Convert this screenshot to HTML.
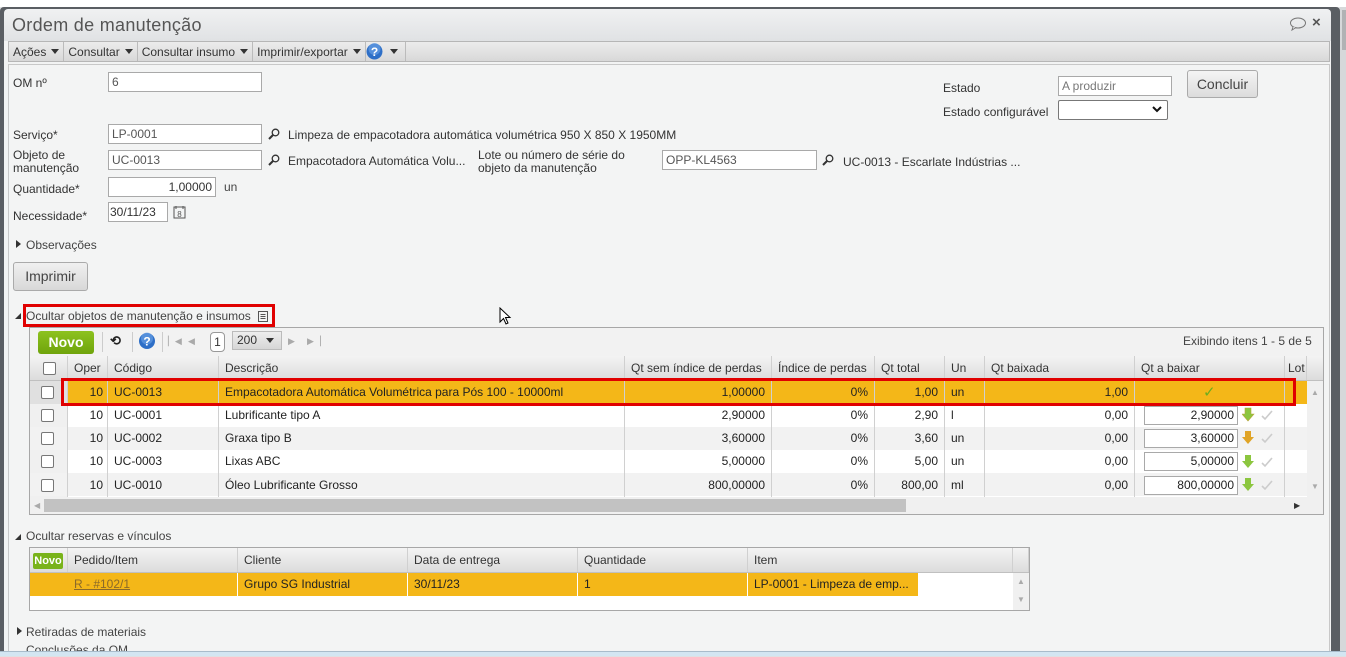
<!DOCTYPE html>
<html><head><meta charset="utf-8">
<style>
*{box-sizing:border-box;margin:0;padding:0}
body{width:1346px;height:656px;overflow:hidden;background:#dfe1e3;font-family:"Liberation Sans",sans-serif;font-size:12px;color:#333;position:relative}
.a{position:absolute}
.inp{position:absolute;background:#fff;border:1px solid #a9a9a9;height:20px;padding:1px 3px;font-size:12px;color:#555;line-height:16px;white-space:nowrap}
.lbl{position:absolute;font-size:12px;color:#333;line-height:13px}
.tb{display:flex;align-items:center}
.tb span{display:flex;align-items:center;padding:0 4px;border-right:1px solid #bbb;height:19px}
.grid{position:absolute;border:1px solid #a7a7a7;background:#fff}
.hdr{position:absolute;background:linear-gradient(#f4f4f4,#dcdcdc);border-bottom:1px solid #c0c0c0}
.c{position:absolute;height:100%;border-right:1px solid #d0d0d0;padding:0 6px;white-space:nowrap;overflow:hidden}
.row{position:absolute;left:0;height:23px;line-height:23px}
.r{text-align:right}
.cb{position:absolute;width:13px;height:13px;border:1px solid #777;border-radius:2px;background:#fff}
.tri{display:inline-block;width:0;height:0;border-left:4px solid transparent;border-right:4px solid transparent;border-top:5px solid #333;margin-left:5px}
.mag{position:absolute;width:12px;height:12px}
</style></head><body>
<div class="a" style="left:0;top:0;width:1346px;height:7px;background:#fff"></div>
<div class="a" style="left:0;top:7px;width:1340px;height:644px;background:#5a5e63;border-radius:4px 4px 0 0"></div>
<div class="a" style="left:1340px;top:7px;width:6px;height:644px;background:#d6d8da"></div>
<div class="a" style="left:1342px;top:10px;width:4px;height:40px;background:#b0b2b4"></div>
<div class="a" style="left:4px;top:9px;width:1327px;height:32px;background:linear-gradient(#f0f1f2,#e0e2e4);border-radius:4px 4px 0 0"></div>
<div class="a" style="left:12px;top:15px;font-size:18px;color:#555;letter-spacing:0.3px">Ordem de manutenção</div>
<svg class="a" style="left:1289px;top:17px" width="18" height="14"><ellipse cx="9" cy="6" rx="7.5" ry="5" fill="none" stroke="#777" stroke-width="1"/><path d="M4 10 L3 13 L7 10.5" fill="#fff" stroke="#777" stroke-width="1"/></svg>
<div class="a" style="left:1312px;top:14px;font-size:15px;font-weight:bold;color:#555">×</div>
<div class="a" style="left:4px;top:41px;width:1327px;height:610px;background:#f2f3f3"></div>
<div class="a tb" style="left:8px;top:41px;width:1322px;height:21px;background:linear-gradient(#ececec,#d8d8d8);border:1px solid #b6b6b6;font-size:12px;color:#333">
<span>Ações<i class="tri"></i></span><span>Consultar<i class="tri"></i></span><span>Consultar insumo<i class="tri"></i></span><span>Imprimir/exportar<i class="tri"></i></span><span style="width:40px;position:relative;padding:0"><svg style="position:absolute;left:0;top:1px" width="17" height="17"><circle cx="8.5" cy="8.5" r="8" fill="#2e6fc7"/><circle cx="8.5" cy="6" r="6" fill="#6ea5e8" opacity=".6"/><text x="8.5" y="13" font-size="12" font-weight="bold" fill="#fff" text-anchor="middle" font-family="Liberation Sans">?</text></svg><i class="tri" style="position:absolute;left:24px;top:7px;margin:0"></i></span>
</div>
<div class="a" style="left:8px;top:64px;width:1322px;height:587px;border:1px solid #c8c8c8;border-bottom:none;background:#f3f4f4"></div>

<div class="lbl" style="left:13px;top:77px">OM nº</div>
<div class="inp" style="left:108px;top:72px;width:154px">6</div>
<div class="lbl" style="left:943px;top:82px">Estado</div>
<div class="inp" style="left:1058px;top:76px;width:114px;color:#777">A produzir</div>
<div class="lbl" style="left:943px;top:106px">Estado configurável</div>
<div class="inp" style="left:1058px;top:100px;width:110px;height:20px;border-color:#777;border-radius:2px"><svg style="position:absolute;right:5px;top:5px" width="10" height="7"><path d="M1 1 L5 5 L9 1" fill="none" stroke="#111" stroke-width="2"/></svg></div>
<div class="a" style="left:1187px;top:70px;width:71px;height:28px;border:1px solid #aaa;border-radius:3px;background:linear-gradient(#f4f4f4,#dcdcdc);font-size:14px;color:#444;text-align:center;line-height:26px">Concluir</div>

<div class="lbl" style="left:13px;top:129px">Serviço*</div>
<div class="inp" style="left:108px;top:124px;width:154px">LP-0001</div>
<svg class="mag" style="left:268px;top:128px" viewBox="0 0 12 12"><circle cx="7.5" cy="4.5" r="3.3" fill="none" stroke="#333" stroke-width="1.3"/><path d="M5 7 L1 11" stroke="#333" stroke-width="2"/></svg>
<div class="lbl" style="left:288px;top:129px">Limpeza de empacotadora automática volumétrica 950 X 850 X 1950MM</div>

<div class="lbl" style="left:13px;top:149px">Objeto de<br>manutenção</div>
<div class="inp" style="left:108px;top:150px;width:154px">UC-0013</div>
<svg class="mag" style="left:268px;top:154px" viewBox="0 0 12 12"><circle cx="7.5" cy="4.5" r="3.3" fill="none" stroke="#333" stroke-width="1.3"/><path d="M5 7 L1 11" stroke="#333" stroke-width="2"/></svg>
<div class="lbl" style="left:288px;top:155px">Empacotadora Automática Volu...</div>
<div class="lbl" style="left:478px;top:149px">Lote ou número de série do<br>objeto da manutenção</div>
<div class="inp" style="left:662px;top:150px;width:155px">OPP-KL4563</div>
<svg class="mag" style="left:822px;top:154px" viewBox="0 0 12 12"><circle cx="7.5" cy="4.5" r="3.3" fill="none" stroke="#333" stroke-width="1.3"/><path d="M5 7 L1 11" stroke="#333" stroke-width="2"/></svg>
<div class="lbl" style="left:843px;top:156px">UC-0013 - Escarlate Indústrias ...</div>

<div class="lbl" style="left:13px;top:183px">Quantidade*</div>
<div class="inp" style="left:108px;top:177px;width:108px;text-align:right;color:#333">1,00000</div>
<div class="lbl" style="left:224px;top:181px;color:#444">un</div>

<div class="lbl" style="left:13px;top:210px">Necessidade*</div>
<div class="inp" style="left:108px;top:202px;width:60px;color:#333;padding:1px 1px">30/11/23</div>
<svg class="a" style="left:173px;top:205px" width="13" height="14"><rect x="1" y="2" width="11" height="11" fill="none" stroke="#555"/><path d="M3 1v3M10 1v3" stroke="#555"/><text x="6.5" y="12" font-size="8" text-anchor="middle" fill="#555" font-family="Liberation Sans">8</text></svg>

<div class="a" style="left:16px;top:240px;width:0;height:0;border-top:4px solid transparent;border-bottom:4px solid transparent;border-left:5px solid #333"></div>
<div class="lbl" style="left:26px;top:239px;color:#444">Observações</div>
<div class="a" style="left:13px;top:262px;width:75px;height:29px;border:1px solid #aaa;border-radius:3px;background:linear-gradient(#f0f0f0,#d8d8d8);font-size:14px;color:#444;text-align:center;line-height:27px">Imprimir</div>

<div class="a" style="left:15px;top:313px;width:0;height:0;border-left:6px solid transparent;border-bottom:6px solid #333"></div>
<div class="lbl" style="left:26px;top:310px;color:#444">Ocultar objetos de manutenção e insumos</div>
<svg class="a" style="left:258px;top:311px" width="10" height="11"><rect x="0.5" y="0.5" width="9" height="10" fill="none" stroke="#555"/><path d="M2.5 3.5h5M2.5 5.5h5M2.5 7.5h5" stroke="#555"/></svg>
<div class="a" style="left:23px;top:304px;width:252px;height:23px;border:3px solid #e00000"></div>
<svg class="a" style="left:499px;top:307px" width="14" height="20"><path d="M1 1 L1 15 L4.5 11.5 L7 17 L9 16 L6.5 10.5 L11 10.5 Z" fill="#fff" stroke="#000" stroke-width="1"/></svg>

<div class="grid" style="left:29px;top:327px;width:1295px;height:188px;background:#f2f2f2">
 <div class="a" style="left:8px;top:3px;width:56px;height:23px;background:linear-gradient(#8dc21f,#6fa40c);border-radius:3px;color:#fff;font-weight:bold;font-size:14px;text-align:center;line-height:23px">Novo</div>
 <div class="a" style="left:72px;top:4px;width:1px;height:20px;background:#ccc"></div>
 <div class="a" style="left:80px;top:5px;font-size:13px;font-weight:bold;color:#222">⟲</div>
 <div class="a" style="left:102px;top:4px;width:1px;height:20px;background:#ccc"></div>
 <svg class="a" style="left:108px;top:4px" width="18" height="18"><circle cx="9" cy="9" r="8" fill="#2e6fc7"/><circle cx="9" cy="6.5" r="6" fill="#6ea5e8" opacity=".6"/><text x="9" y="13.5" font-size="12" font-weight="bold" fill="#fff" text-anchor="middle" font-family="Liberation Sans">?</text></svg>
 <div class="a" style="left:132px;top:4px;width:1px;height:20px;background:#ccc"></div>
 <div class="a" style="left:138px;top:8px;color:#aaa;font-size:9px">▏◀</div>
 <div class="a" style="left:158px;top:8px;color:#aaa;font-size:9px">◀</div>
 <div class="a" style="left:180px;top:4px;width:15px;height:20px;border:1px solid #999;border-radius:4px;background:#fff;text-align:center;line-height:18px">1</div>
 <div class="a" style="left:202px;top:3px;width:50px;height:19px;border:1px solid #bbb;background:linear-gradient(#eee,#d6d6d6);padding-left:4px;line-height:17px">200<i class="tri" style="margin-left:9px;vertical-align:middle"></i></div>
 <div class="a" style="left:258px;top:8px;color:#aaa;font-size:9px">▶</div>
 <div class="a" style="left:277px;top:8px;color:#aaa;font-size:9px">▶▕</div>
 <div class="a" style="left:1153px;top:6px;color:#444">Exibindo itens 1 - 5 de 5</div>

 <div class="hdr" style="left:0;top:28px;width:1293px;height:25px;line-height:24px">
  <div class="c" style="left:0;width:38px"></div><div class="cb" style="left:13px;top:6px"></div>
  <div class="c" style="left:38px;width:40px">Oper</div>
  <div class="c" style="left:78px;width:111px">Código</div>
  <div class="c" style="left:189px;width:406px">Descrição</div>
  <div class="c" style="left:595px;width:147px">Qt sem índice de perdas</div>
  <div class="c" style="left:742px;width:103px">Índice de perdas</div>
  <div class="c" style="left:845px;width:70px">Qt total</div>
  <div class="c" style="left:915px;width:40px">Un</div>
  <div class="c" style="left:955px;width:150px">Qt baixada</div>
  <div class="c" style="left:1105px;width:150px">Qt a baixar</div>
  <div class="c" style="left:1255px;width:22px;padding:0 3px">Lot</div>
 </div>
 <div class="a" style="left:0;top:53px;width:1277px;height:116px;background:#fff"></div>
 <div class="a" style="left:0;top:53px;width:38px;height:116px;background:#f0f0f0"></div>
 <div class="row" style="top:53px;width:1277px;background:#f4b718"></div>
 <div class="row" style="top:99px;width:1277px;background:#f2f2f2"></div>
 <div class="row" style="top:145px;width:1277px;background:#f2f2f2"></div>
 <div class="a" style="left:0;top:53px;width:38px;height:23px;background:#e0e0e0"></div>
 <div class="a" style="left:37px;top:53px;width:1px;height:116px;background:#d0d0d0"></div>
 <div class="a" style="left:77px;top:53px;width:1px;height:116px;background:#d0d0d0"></div>
 <div class="a" style="left:188px;top:53px;width:1px;height:116px;background:#d0d0d0"></div>
 <div class="a" style="left:594px;top:53px;width:1px;height:116px;background:#d0d0d0"></div>
 <div class="a" style="left:741px;top:53px;width:1px;height:116px;background:#d0d0d0"></div>
 <div class="a" style="left:844px;top:53px;width:1px;height:116px;background:#d0d0d0"></div>
 <div class="a" style="left:914px;top:53px;width:1px;height:116px;background:#d0d0d0"></div>
 <div class="a" style="left:954px;top:53px;width:1px;height:116px;background:#d0d0d0"></div>
 <div class="a" style="left:1104px;top:53px;width:1px;height:116px;background:#d0d0d0"></div>
 <div class="a" style="left:1254px;top:53px;width:1px;height:116px;background:#d0d0d0"></div>
 <div class="a" style="left:0;top:53px;width:1277px;line-height:23px;color:#222">
  <div style="position:relative;height:23px"><div class="cb" style="left:11px;top:5px"></div><span class="a r" style="left:38px;width:35px">10</span><span class="a" style="left:84px">UC-0013</span><span class="a" style="left:195px">Empacotadora Automática Volumétrica para Pós 100 - 10000ml</span><span class="a r" style="left:595px;width:140px">1,00000</span><span class="a r" style="left:742px;width:96px">0%</span><span class="a r" style="left:845px;width:63px">1,00</span><span class="a" style="left:921px">un</span><span class="a r" style="left:955px;width:143px">1,00</span><span class="a" style="left:1173px;color:#6cad1f;font-size:15px">✓</span></div>
  <div style="position:relative;height:23px"><div class="cb" style="left:11px;top:5px"></div><span class="a r" style="left:38px;width:35px">10</span><span class="a" style="left:84px">UC-0001</span><span class="a" style="left:195px">Lubrificante tipo A</span><span class="a r" style="left:595px;width:140px">2,90000</span><span class="a r" style="left:742px;width:96px">0%</span><span class="a r" style="left:845px;width:63px">2,90</span><span class="a" style="left:921px">l</span><span class="a r" style="left:955px;width:143px">0,00</span><div class="inp" style="left:1114px;top:2px;width:94px;height:19px;text-align:right;color:#222;line-height:15px">2,90000</div></div>
  <div style="position:relative;height:23px"><div class="cb" style="left:11px;top:5px"></div><span class="a r" style="left:38px;width:35px">10</span><span class="a" style="left:84px">UC-0002</span><span class="a" style="left:195px">Graxa tipo B</span><span class="a r" style="left:595px;width:140px">3,60000</span><span class="a r" style="left:742px;width:96px">0%</span><span class="a r" style="left:845px;width:63px">3,60</span><span class="a" style="left:921px">un</span><span class="a r" style="left:955px;width:143px">0,00</span><div class="inp" style="left:1114px;top:2px;width:94px;height:19px;text-align:right;color:#222;line-height:15px">3,60000</div></div>
  <div style="position:relative;height:24px"><div class="cb" style="left:11px;top:5px"></div><span class="a r" style="left:38px;width:35px">10</span><span class="a" style="left:84px">UC-0003</span><span class="a" style="left:195px">Lixas ABC</span><span class="a r" style="left:595px;width:140px">5,00000</span><span class="a r" style="left:742px;width:96px">0%</span><span class="a r" style="left:845px;width:63px">5,00</span><span class="a" style="left:921px">un</span><span class="a r" style="left:955px;width:143px">0,00</span><div class="inp" style="left:1114px;top:2px;width:94px;height:19px;text-align:right;color:#222;line-height:15px">5,00000</div></div>
  <div style="position:relative;height:23px"><div class="cb" style="left:11px;top:5px"></div><span class="a r" style="left:38px;width:35px">10</span><span class="a" style="left:84px">UC-0010</span><span class="a" style="left:195px">Óleo Lubrificante Grosso</span><span class="a r" style="left:595px;width:140px">800,00000</span><span class="a r" style="left:742px;width:96px">0%</span><span class="a r" style="left:845px;width:63px">800,00</span><span class="a" style="left:921px">ml</span><span class="a r" style="left:955px;width:143px">0,00</span><div class="inp" style="left:1114px;top:2px;width:94px;height:19px;text-align:right;color:#222;line-height:15px">800,00000</div></div>
 </div>
 <svg class="a" style="left:1212px;top:79px" width="40" height="90">
  <g><path d="M3 1h6v6h3l-6 7-6-7h3z" fill="#8cc63f" stroke="#b8a53a" stroke-width=".6"/><path d="M20 9l3 3 7-8" fill="none" stroke="#ccc" stroke-width="1.6"/></g>
  <g transform="translate(0,23)"><path d="M3 1h6v6h3l-6 7-6-7h3z" fill="#e0a426"/><path d="M20 9l3 3 7-8" fill="none" stroke="#ccc" stroke-width="1.6"/></g>
  <g transform="translate(0,47)"><path d="M3 1h6v6h3l-6 7-6-7h3z" fill="#8cc63f"/><path d="M20 9l3 3 7-8" fill="none" stroke="#ccc" stroke-width="1.6"/></g>
  <g transform="translate(0,70)"><path d="M3 1h6v6h3l-6 7-6-7h3z" fill="#8cc63f"/><path d="M20 9l3 3 7-8" fill="none" stroke="#ccc" stroke-width="1.6"/></g>
 </svg>
 <div class="a" style="left:1277px;top:53px;width:16px;height:116px;background:#f0f0f0"></div>
 <div class="a" style="left:1281px;top:60px;font-size:8px;color:#aaa">▲</div>
 <div class="a" style="left:1281px;top:154px;font-size:8px;color:#aaa">▼</div>
 <div class="a" style="left:0;top:169px;width:1293px;height:17px;background:#f0f0f0"></div>
 <div class="a" style="left:14px;top:171px;width:862px;height:13px;background:#c2c2c2"></div>
 <div class="a" style="left:4px;top:173px;font-size:8px;color:#aaa">◀</div>
 <div class="a" style="left:1264px;top:173px;font-size:8px;color:#333">▶</div>
</div>
<div class="a" style="left:61px;top:378px;width:1235px;height:28px;border:3px solid #e00000"></div>

<div class="a" style="left:15px;top:534px;width:0;height:0;border-left:6px solid transparent;border-bottom:6px solid #333"></div>
<div class="lbl" style="left:26px;top:530px;color:#444">Ocultar reservas e vínculos</div>
<div class="grid" style="left:29px;top:547px;width:1001px;height:64px">
 <div class="hdr" style="left:0;top:0;width:999px;height:25px;line-height:24px">
  <div class="c" style="left:0;width:38px"></div>
  <div class="c" style="left:38px;width:170px">Pedido/Item</div>
  <div class="c" style="left:208px;width:170px">Cliente</div>
  <div class="c" style="left:378px;width:170px">Data de entrega</div>
  <div class="c" style="left:548px;width:170px">Quantidade</div>
  <div class="c" style="left:718px;width:265px">Item</div>
  <div class="c" style="left:983px;width:16px"></div>
 </div>
 <div class="a" style="left:3px;top:5px;width:30px;height:16px;background:#79b31a;border-radius:2px;color:#fff;font-weight:bold;font-size:11px;text-align:center;line-height:16px">Novo</div>
 <div class="a" style="left:0;top:25px;width:888px;height:23px;background:#f4b718;line-height:23px;color:#222">
  <span class="a" style="left:44px;color:#8a6a2a;text-decoration:underline">R - #102/1</span>
  <span class="a" style="left:214px">Grupo SG Industrial</span>
  <span class="a" style="left:384px">30/11/23</span>
  <span class="a" style="left:554px">1</span>
  <span class="a" style="left:724px">LP-0001 - Limpeza de emp...</span>
  <div class="a" style="left:207px;top:0;width:1px;height:23px;background:#fff"></div>
  <div class="a" style="left:377px;top:0;width:1px;height:23px;background:#fff"></div>
  <div class="a" style="left:547px;top:0;width:1px;height:23px;background:#fff"></div>
  <div class="a" style="left:717px;top:0;width:1px;height:23px;background:#fff"></div>
 </div>
 <div class="a" style="left:983px;top:25px;width:16px;height:37px;background:#f0f0f0"></div>
 <div class="a" style="left:987px;top:29px;font-size:8px;color:#aaa">▲</div>
 <div class="a" style="left:987px;top:47px;font-size:8px;color:#aaa">▼</div>
</div>

<div class="a" style="left:17px;top:627px;width:0;height:0;border-top:4px solid transparent;border-bottom:4px solid transparent;border-left:5px solid #333"></div>
<div class="lbl" style="left:26px;top:626px;color:#444">Retiradas de materiais</div>
<div class="lbl" style="left:26px;top:644px;color:#444">Conclusões da OM</div>
<div class="a" style="left:0;top:651px;width:1346px;height:5px;background:#d3e6f2;border-top:1px solid #a8bccb"></div>
</body></html>
